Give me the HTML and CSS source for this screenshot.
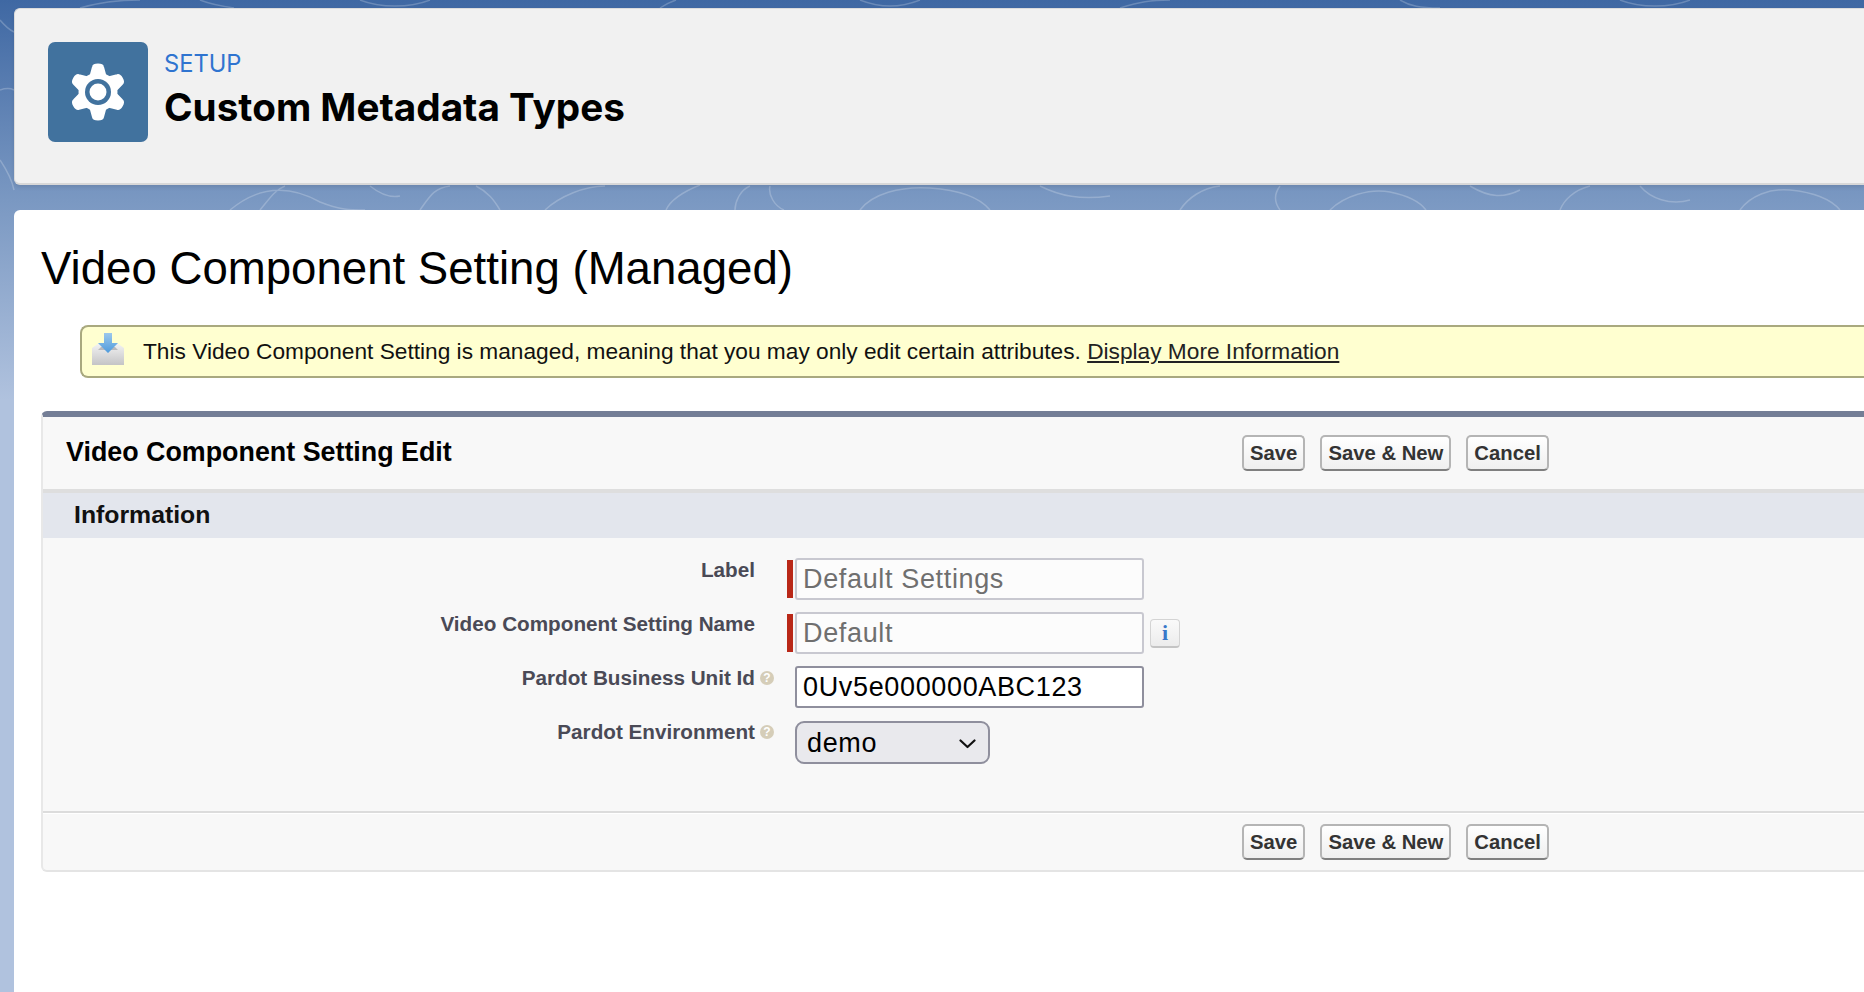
FILE: index.html
```html
<!DOCTYPE html>
<html lang="en">
<head>
  <meta charset="UTF-8" />
  <title>Custom Metadata Types</title>
  <link rel="stylesheet" href="styles.css">
</head>
<body>
  <!-- Wallpaper squiggles behind the cards -->
  <svg class="swirls" width="1864" height="992" viewBox="0 0 1864 992" fill="none">
    <path d="M0 20c5 6 10 10 14 12M0 90c6-2 10-2 14 0M0 160c8 12 12 20 14 30M230 210c30-25 60-25 90-8 20 8 30 8 45 8M260 210c10-12 15-20 25-24M370 186c10 8 20 12 30 10M420 210c10-14 14-22 30-24M500 210c-6-10-12-18-24-24M545 210c15-14 40-24 60-24M700 185c-20 8-30 16-34 25M735 210c0-8 5-20 15-24M770 186c-2 8 4 20 14 24" />
    <path d="M860 210c12-16 40-24 70-22 30 2 50 10 60 22M1040 186c20 10 40 14 70 10M1180 210c8-12 22-22 40-24M1280 186c-6 8-6 16 0 24M1330 210c14-14 40-22 60-18 20 4 30 10 36 18M1470 186c20 12 34 12 50 4M1560 210c4-10 14-20 30-24M1640 186c10 12 30 20 50 14M1740 210c10-14 30-22 50-20 20 2 40 8 50 20" />
    <path d="M80 8c20-6 40-8 60-8M200 0c10 4 20 6 34 8M360 0c20 8 50 8 70 0M660 8c6-4 10-6 16-8M860 0c20 8 40 8 60 0M1120 8c20-6 30-8 50-8M1400 0c10 6 20 8 40 8M1620 0c20 8 50 8 70 0" />
  </svg>

  <div class="page">
    <header class="page-header">
      <div class="header-icon">
        <svg width="100" height="100" viewBox="0 0 100 100">
          <g fill="#fff" stroke="#fff" stroke-width="2" stroke-linejoin="round">
            <path d="M42 36l3-11q.5-2.500 5-2.500t5 2.500l3 11z" />
            <path d="M42 36l3-11q.5-2.500 5-2.500t5 2.500l3 11z" transform="rotate(60 50 50)" />
            <path d="M42 36l3-11q.5-2.500 5-2.500t5 2.500l3 11z" transform="rotate(120 50 50)" />
            <path d="M42 36l3-11q.5-2.500 5-2.500t5 2.500l3 11z" transform="rotate(180 50 50)" />
            <path d="M42 36l3-11q.5-2.500 5-2.500t5 2.500l3 11z" transform="rotate(240 50 50)" />
            <path d="M42 36l3-11q.5-2.500 5-2.500t5 2.500l3 11z" transform="rotate(300 50 50)" />
          </g>
          <circle cx="50" cy="50" r="19.500" fill="#fff" />
          <circle cx="50" cy="50" r="13" fill="#41729e" />
          <circle cx="50" cy="50" r="8.500" fill="#fff" />
        </svg>
      </div>
      <div class="header-text">
        <div class="eyebrow">SETUP</div>
        <h1 class="header-title">Custom Metadata Types</h1>
      </div>
    </header>

    <main class="content">
      <h2 class="page-title">Video Component Setting (Managed)</h2>

      <div class="message">
        <svg class="message-icon" width="32" height="32" viewBox="0 0 32 32">
          <defs>
            <linearGradient id="tray" x1="0" y1="0" x2="0" y2="1">
              <stop offset="0" stop-color="#f4f4f4" />
              <stop offset="1" stop-color="#c4c4c6" />
            </linearGradient>
            <linearGradient id="arrow" x1="0" y1="0" x2="0" y2="1">
              <stop offset="0" stop-color="#9cc8ec" />
              <stop offset="1" stop-color="#4f9bdc" />
            </linearGradient>
          </defs>
          <path d="M0 32V15l7-5h18l7 5v17z" fill="url(#tray)" />
          <path d="M6 17l3-3h14l3 3z" fill="#b9b9bc" />
          <path d="M12 0h8v10h6l-10 10L6 10h6z" fill="url(#arrow)" />
        </svg>
        <span>This Video Component Setting is managed, meaning that you may only edit certain attributes. <a href="#" class="message-link">Display More Information</a></span>
      </div>

      <section class="panel">
        <div class="panel-head">
          <h3 class="panel-title">Video Component Setting Edit</h3>
          <div class="btn-row">
            <button class="btn">Save</button>
            <button class="btn">Save &amp; New</button>
            <button class="btn">Cancel</button>
          </div>
        </div>
        <h4 class="section-title">Information</h4>

        <div class="fields">
          <div class="field">
            <label class="field-label">Label</label>
            <span class="field-help"></span>
            <span class="required"></span>
            <input class="text-input" type="text" value="Default Settings" disabled>
          </div>
          <div class="field">
            <label class="field-label">Video Component Setting Name</label>
            <span class="field-help"></span>
            <span class="required"></span>
            <input class="text-input" type="text" value="Default" disabled>
            <span class="info-btn">i</span>
          </div>
          <div class="field">
            <label class="field-label">Pardot Business Unit Id</label>
            <span class="field-help"><span class="help-dot">?</span></span>
            <span class="required off"></span>
            <input class="text-input" type="text" value="0Uv5e000000ABC123">
          </div>
          <div class="field">
            <label class="field-label">Pardot Environment</label>
            <span class="field-help"><span class="help-dot">?</span></span>
            <span class="required off"></span>
            <div class="select-box">
              <span>demo</span>
              <svg width="17" height="10" viewBox="0 0 17 10" fill="none"><path d="M1.500 1.500L8.500 8l7-6.500" stroke="#111" stroke-width="2.200" stroke-linecap="round" stroke-linejoin="round" /></svg>
            </div>
          </div>
        </div>

        <div class="panel-foot">
          <div class="btn-row">
            <button class="btn">Save</button>
            <button class="btn">Save &amp; New</button>
            <button class="btn">Cancel</button>
          </div>
        </div>
      </section>
    </main>
  </div>
</body>
</html>
```
FILE: styles.css
```css
* { margin: 0; padding: 0; box-sizing: border-box; }
html, body { height: 992px; overflow: hidden; }
body {
  font-family: "Liberation Sans", Arial, sans-serif;
  background: linear-gradient(180deg, #3f68a3 0, #7a98c2 200px, #b0c2de 400px, #b0c2de 100%);
  position: relative;
}
.swirls {
  position: absolute;
  top: 0;
  left: 0;
  stroke: rgba(255,255,255,0.22);
  stroke-width: 1.5;
}
.page {
  position: relative;
  display: flex;
  flex-direction: column;
  height: 992px;
  padding: 8px 0 0 14px;
}

/* Top card */
.page-header {
  height: 177px;
  margin-bottom: 25px;
  padding: 34px 0 0 34px;
  display: flex;
  background: #f1f1f1;
  border-radius: 6px 0 0 6px;
  border-bottom: 2px solid #d8d8d8;
  border-left: 1px solid #dcdcdc;
  border-top: 1px solid #dcdcdc;
  box-shadow: 0 2px 4px rgba(0,0,0,0.1);
}
.header-icon {
  width: 100px;
  height: 100px;
  margin-top: -1px;
  margin-left: -1px;
  background: #41729e;
  border-radius: 7px;
}
.header-text { margin-left: 16px; }
.eyebrow {
  font-family: Inter, sans-serif;
  font-size: 23.700px;
  line-height: 28px;
  margin-top: 7px;
  color: #2f74d0;
}
.header-title {
  font-family: Inter, sans-serif;
  font-size: 38.700px;
  font-weight: 700;
  line-height: 46px;
  margin-top: 6px;
  color: #000;
}

/* White card */
.content {
  flex: 1;
  background: #fff;
  border-radius: 6px 0 0 0;
  padding: 0 0 0 27px;
}
.page-title {
  font-size: 45.600px;
  font-weight: 400;
  line-height: 52px;
  margin: 33px 0 0;
  color: #000;
}
.message {
  display: flex;
  align-items: center;
  height: 53px;
  margin: 30px 0 33px 39px;
  padding-left: 10px;
  background: #ffffd0;
  border: 2px solid #a9a97f;
  border-right: 0;
  border-radius: 8px 0 0 8px;
  font-size: 22.700px;
  color: #111;
}
.message > span { margin-top: -1px; }
.message-icon { margin: -6px 19px 0 0; flex: none; }
.message-link { color: #222; }

/* Edit panel */
.panel {
  background: #f8f8f8;
  border-top: 6px solid #747e96;
  border-left: 2px solid #e8e8e8;
  border-bottom: 2px solid #e4e4e4;
  border-radius: 6px 0 0 6px;
  height: 461px;
}
.panel-head {
  display: flex;
  align-items: center;
  height: 72px;
}
.panel-title {
  width: 1199px;
  padding: 0 0 2px 23px;
  font-size: 26.850px;
  color: #000;
}
.btn-row { display: flex; gap: 15px; }
.btn {
  height: 36px;
  padding: 0 6px;
  font-family: "Liberation Sans", Arial, sans-serif;
  font-size: 20.300px;
  font-weight: 700;
  color: #333;
  background: linear-gradient(#fff, #efefef);
  border: 2px solid #b5b5b5;
  border-bottom-color: #7f7f7f;
  border-radius: 5px;
}
.section-title {
  height: 49px;
  padding: 7px 0 0 31px;
  border-top: 4px solid #dedede;
  background: #e3e6ed;
  font-size: 24.800px;
  line-height: 30px;
  color: #111;
}

.fields {
  height: 273px;
  padding-top: 20px;
  display: flex;
  flex-direction: column;
  gap: 12px;
}
.field { display: flex; align-items: flex-start; height: 42px; }
.field-label {
  width: 712px;
  margin-top: 1px;
  text-align: right;
  font-size: 20.700px;
  line-height: 22px;
  font-weight: 700;
  color: #4a4a56;
}
.field-help { width: 32px; flex: none; padding: 5px 0 0 5px; }
.help-dot {
  display: block;
  width: 14px;
  height: 14px;
  border-radius: 50%;
  background: #d5cdb8;
  color: #fff;
  font-size: 12px;
  font-weight: 700;
  line-height: 14px;
  text-align: center;
}
.required {
  width: 6px;
  height: 38px;
  margin: 2px 2px 0 0;
  flex: none;
  background: #b92818;
}
.required.off { background: none; }
.text-input {
  width: 349px;
  height: 42px;
  padding: 0 6px;
  font-family: "Liberation Sans", Arial, sans-serif;
  font-size: 27px;
  letter-spacing: 0.650px;
  color: #000;
  background: #fff;
  border: 2px solid #8f8f9d;
  border-radius: 3px;
  outline: none;
}
.text-input:disabled {
  color: #6f6f6f;
  background: #fcfcfc;
  border-color: #c8c8d0;
}
.info-btn {
  width: 30px;
  height: 29px;
  margin: 7px 0 0 6px;
  border: 1px solid #d4d4d4;
  border-bottom: 2px solid #c4c4c4;
  border-radius: 4px;
  background: linear-gradient(#fafafa, #ececec);
  color: #3a78c9;
  font-family: "Liberation Serif", serif;
  font-size: 22px;
  font-weight: 700;
  line-height: 26px;
  text-align: center;
}
.select-box {
  display: flex;
  align-items: center;
  justify-content: space-between;
  width: 195px;
  height: 43px;
  margin-top: 1px;
  padding: 2px 12px 0 10px;
  background: #e9e9ed;
  border: 2px solid #8f8f9d;
  border-radius: 9px;
  font-size: 27px;
  letter-spacing: 0.650px;
  color: #000;
}

.panel-foot {
  height: 61px;
  padding: 11px 0 0 1199px;
  border-top: 2px solid #dcdcdc;
  box-shadow: inset 0 1px 0 #fff;
}
```
